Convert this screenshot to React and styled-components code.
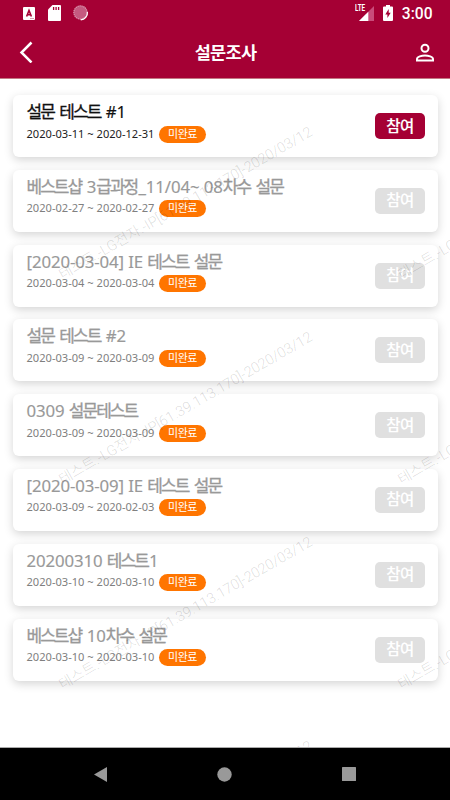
import React from "react";
import styled, { createGlobalStyle } from "styled-components";

const surveys = [
  { title: "설문 테스트 #1", start: "2020-03-11", end: "2020-12-31", open: true },
  { title: "베스트샵 3급과정_11/04~ 08차수 설문", start: "2020-02-27", end: "2020-02-27" },
  { title: "[2020-03-04] IE 테스트 설문", start: "2020-03-04", end: "2020-03-04" },
  { title: "설문 테스트 #2", start: "2020-03-09", end: "2020-03-09" },
  { title: "0309 설문테스트", start: "2020-03-09", end: "2020-03-09" },
  { title: "[2020-03-09] IE 테스트 설문", start: "2020-03-09", end: "2020-02-03" },
  { title: "20200310 테스트1", start: "2020-03-10", end: "2020-03-10" },
  { title: "베스트샵 10차수 설문", start: "2020-03-10", end: "2020-03-10" },
];

const marks = [
  { x: 65, y: 284 },
  { x: 65, y: 489 },
  { x: 65, y: 694 },
  { x: 65, y: 898 },
  { x: 404, y: 284 },
  { x: 404, y: 489 },
  { x: 404, y: 694 },
];

// Hangul runs are set tighter than the digits around them
const MixedText = ({ children }) =>
  children
    .split(/([가-힣]+)/)
    .map((run, i) => (i % 2 ? <Hangul key={i}>{run}</Hangul> : run));

const StatusBar = () => (
  <StatusContainer>
    <StatusGroup>
      <svg width="12" height="13" viewBox="0 0 12 13">
        <rect width="12" height="13" rx="1" fill="#fff" />
        <path d="M3.6 9.5 6 3.5l2.4 6M4.4 7.7h3.2" fill="none" stroke="#a50034" strokeWidth="1.6" />
        <path d="M7 11.5h4" stroke="#d9a0b0" strokeWidth="1" />
      </svg>
      <svg width="13" height="16" viewBox="0 0 13 16">
        <path d="M4.5 0H12q1 0 1 1v14q0 1-1 1H1q-1 0-1-1V4.5z" fill="#fff" />
        <path d="M5.6 2v3M8.1 2v3M10.6 2v3" stroke="#a50034" strokeWidth="1.3" />
      </svg>
      <svg width="16" height="16" viewBox="0 0 16 16">
        <circle cx="7.5" cy="7.5" r="7" fill="#c55a80" />
        <circle cx="7.5" cy="7.5" r="6.6" fill="none" stroke="#dc9ab0" strokeWidth="1.2" strokeDasharray="1 1" />
        <path d="M14.4 7A7 7 0 0 1 7.8 14.8" fill="none" stroke="#fff" strokeWidth="1.2" />
      </svg>
    </StatusGroup>
    <StatusGroup $right>
      <Signal>
        <Lte>LTE</Lte>
        <svg width="15" height="15" viewBox="0 0 15 15">
          <path d="M15 0v15H0z" fill="#c94c7a" />
          <path d="M9.3 5.7V15H0z" fill="#fff" />
        </svg>
      </Signal>
      <svg width="10" height="16" viewBox="0 0 10 16">
        <path d="M3 0h4v1.6h2q1 0 1 1V15q0 1-1 1H1q-1 0-1-1V2.6q0-1 1-1h2z" fill="#fff" />
        <path d="M5.7 4 2.3 9.4h2.1V13l3.3-5.3H5.7z" fill="#a50034" />
      </svg>
      <Clock>3:00</Clock>
    </StatusGroup>
  </StatusContainer>
);

const SurveyCard = ({ title, start, end, open }) => (
  <Card>
    <Details>
      <CardTitle $open={open}>
        <MixedText>{title}</MixedText>
      </CardTitle>
      <Meta>
        <Period $open={open}>
          {start} ~ {end}
        </Period>
        <Badge>미완료</Badge>
      </Meta>
    </Details>
    <JoinButton $open={open} disabled={!open}>
      참여
    </JoinButton>
  </Card>
);

const App = () => {
  return (
    <Screen>
      <GlobalStyle />
      <Header>
        <StatusBar />
        <TitleBar>
          <IconButton aria-label="back">
            <svg width="14" height="22" viewBox="0 0 14 22">
              <path d="M12.5 1.5 2.5 11.5 12.5 21.5" fill="none" stroke="#fff" strokeWidth="2.5" />
            </svg>
          </IconButton>
          <PageTitle>설문조사</PageTitle>
          <IconButton aria-label="profile">
            <svg width="20" height="20" viewBox="0 0 20 20" fill="none" stroke="#fff" strokeWidth="2">
              <circle cx="10" cy="6.2" r="3.5" />
              <path d="M2 18.5v-1.5c0-2.3 4.8-3.5 8-3.5s8 1.2 8 3.5v1.5z" />
            </svg>
          </IconButton>
        </TitleBar>
      </Header>
      <Content>
        {surveys.map((survey, i) => (
          <SurveyCard key={i} {...survey} />
        ))}
        <WatermarkLayer>
          {marks.map(({ x, y }) => (
            <Watermark key={`${x}-${y}`} $x={x} $y={y}>
              테스트.-LG전자.-IP[61.39.113.170]-2020/03/12
            </Watermark>
          ))}
        </WatermarkLayer>
      </Content>
      <NavBar>
        <svg width="13" height="15" viewBox="0 0 13 15">
          <path d="M13 0v15L0 7.5z" />
        </svg>
        <svg width="15" height="15" viewBox="0 0 15 15">
          <circle cx="7.5" cy="7.5" r="7.2" />
        </svg>
        <svg width="14" height="14" viewBox="0 0 14 14">
          <rect width="14" height="14" rx="0.5" />
        </svg>
      </NavBar>
    </Screen>
  );
};

export default App;

const GlobalStyle = createGlobalStyle`
  * {
    box-sizing: border-box;
  }
  body {
    margin: 0;
    font-family: "Noto Sans", "Noto Sans CJK KR", sans-serif;
  }
  svg {
    display: block;
    flex-shrink: 0;
  }
`;

const Screen = styled.div`
  display: flex;
  flex-direction: column;
  width: 450px;
  height: 800px;
  overflow: hidden;
  background: #fff;
`;

const Header = styled.header`
  flex-shrink: 0;
  height: 79px;
  background: #a50034;
  border-bottom: 1px solid #c27883;
`;

const StatusContainer = styled.div`
  display: flex;
  justify-content: space-between;
  height: 26px;
  padding: 0 17.5px 0 23px;
`;

const StatusGroup = styled.div`
  display: flex;
  align-items: center;
  gap: ${({ $right }) => ($right ? "9px" : "12.5px")};
`;

const Signal = styled.div`
  position: relative;
  padding: 1px 0 0 4px;
`;

const Lte = styled.span`
  position: absolute;
  top: -1px;
  left: 0;
  font: 700 9px/9px "Roboto", sans-serif;
  color: #fff;
  transform: scaleX(0.7);
  transform-origin: left;
`;

const Clock = styled.span`
  font: 500 15.6px/26px "Roboto", sans-serif;
  color: #fff;
  padding-top: 2px;
`;

const TitleBar = styled.div`
  display: flex;
  align-items: center;
  justify-content: space-between;
  height: 52px;
  padding: 0 15px 0 19px;
`;

const IconButton = styled.button`
  display: flex;
  padding: 0;
  border: 0;
  background: none;
`;

const PageTitle = styled.h1`
  margin: 0;
  padding-left: 3px;
  font: 700 17.5px/24px "Noto Sans CJK KR", sans-serif;
  letter-spacing: -0.7px;
  color: #fff;
`;

const Content = styled.main`
  position: relative;
  flex: 1;
  display: flex;
  flex-direction: column;
  gap: 12.8px;
  padding: 16px 12px 0 13px;
  overflow: hidden;
`;

const Card = styled.section`
  display: flex;
  align-items: center;
  justify-content: space-between;
  flex-shrink: 0;
  height: 62px;
  padding: 0 13px 0 13.5px;
  border-radius: 6px;
  background: #fff;
  box-shadow: 0 3px 10px rgba(0, 0, 0, 0.17);
`;

const Details = styled.div`
  display: flex;
  flex-direction: column;
  height: 100%;
  padding-top: 5px;
`;

const CardTitle = styled.h2`
  margin: 0;
  font-size: 16.8px;
  font-weight: 400;
  line-height: 23px;
  letter-spacing: -0.1px;
  white-space: nowrap;
  color: ${({ $open }) => ($open ? "#111" : "#999")};
  -webkit-text-stroke: 0.15px currentColor;
`;

const Hangul = styled.span`
  margin-right: 1.2px;
  font-size: 17px;
  letter-spacing: -0.115em;
  -webkit-text-stroke: 0.3px currentColor;
`;

const Meta = styled.div`
  display: flex;
  align-items: center;
  gap: 5px;
  height: 21px;
`;

const Period = styled.span`
  width: 127.5px;
  font-size: 11.1px;
  line-height: 18px;
  white-space: nowrap;
  color: ${({ $open }) => ($open ? "#222" : "#808080")};
`;

const Badge = styled.span`
  width: 47px;
  height: 17px;
  margin-top: 1px;
  border-radius: 9px;
  background: #ff7500;
  font-size: 11px;
  line-height: 15px;
  letter-spacing: -0.4px;
  text-align: center;
  color: #fff;
`;

const JoinButton = styled.button`
  width: 50px;
  height: 26px;
  padding: 0 0 2px;
  border: 0;
  border-radius: 5px;
  background: ${({ $open }) => ($open ? "#a50034" : "#e0e0e0")};
  font: 500 15.5px/23px "Noto Sans CJK KR", sans-serif;
  letter-spacing: -0.6px;
  color: #fff;
  -webkit-text-stroke: 0.15px currentColor;
`;

const WatermarkLayer = styled.div`
  position: absolute;
  inset: 0;
  overflow: hidden;
  pointer-events: none;
`;

const Watermark = styled.span`
  position: absolute;
  left: ${({ $x }) => $x}px;
  top: ${({ $y }) => $y - 79 - 18}px;
  font: 300 14.5px/18px "Roboto", "Noto Sans CJK KR", sans-serif;
  white-space: nowrap;
  color: rgba(0, 0, 0, 0.15);
  transform: rotate(-30deg);
  transform-origin: left bottom;
`;

const NavBar = styled.nav`
  display: flex;
  flex-shrink: 0;
  align-items: center;
  justify-content: space-between;
  height: 53px;
  padding: 0 94px;
  border-top: 1px solid #aaa;
  background: #000;
  fill: #999;
`;
